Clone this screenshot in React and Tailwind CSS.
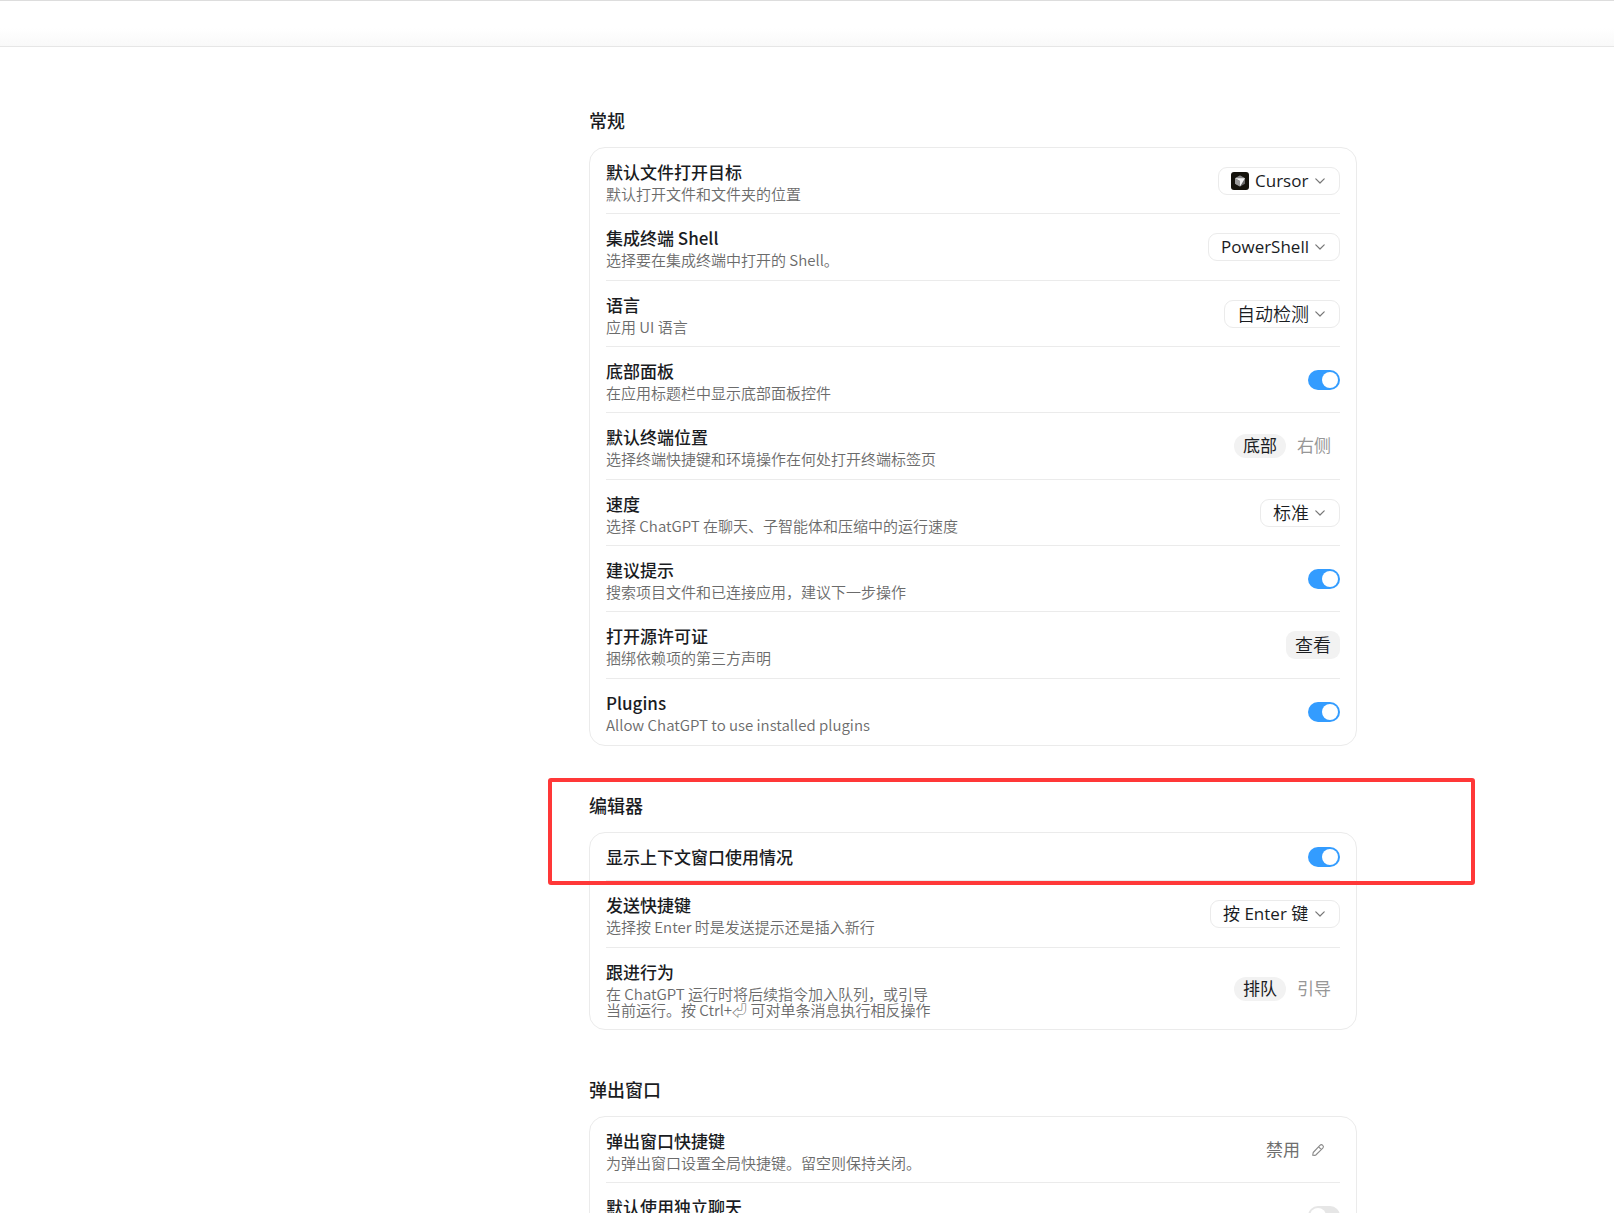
import React, { useState } from "react";

const fontStack = "font-['Open_Sans','Noto_Sans_CJK_SC',sans-serif]";

function ChevronIcon() {
  return (
    <svg
      className="pointer-events-none ml-[6px] h-[10px] w-[10px] shrink-0 text-[#777777]"
      viewBox="0 0 10 10"
      fill="none"
      stroke="currentColor"
      strokeWidth="1.2"
      strokeLinecap="round"
      strokeLinejoin="round"
      aria-hidden="true"
    >
      <path d="M0.8 2.8 5 7l4.2-4.2" />
    </svg>
  );
}

function CursorLogo() {
  return (
    <svg className="mr-[6px] h-[18px] w-[18px] shrink-0" viewBox="0 0 18 18" aria-hidden="true">
      <rect width="18" height="18" rx="3" fill="#14120b" />
      <path d="M9 3.4 4 6.2v5.6l5 2.8 5-2.8V6.2z" fill="#6a6a6a" />
      <path d="M9 3.4 4 6.2 9 9l5-2.8z" fill="#858585" />
      <path d="M4 6.2h10l-5 8.4V9z" fill="#f1f1f1" />
      <path d="M4 6.2 9 9v5.6l-5-2.8z" fill="#9a9a9a" />
    </svg>
  );
}

function PencilIcon() {
  return (
    <svg
      className="h-[14px] w-[14px] text-[#8a8a8a]"
      viewBox="0 0 14 14"
      fill="none"
      stroke="currentColor"
      strokeWidth="1.1"
      strokeLinejoin="round"
      aria-hidden="true"
    >
      <path d="M1.7 12.3 2.2 9.5 8.9 2.4a2 2 0 0 1 2.9 2.8L4.8 12a2 2 0 0 1-.9.4zM7.6 3.8l2.8 2.8" />
    </svg>
  );
}

function Select({ id, value, icon }) {
  // 含拉丁字母的选项字号略小
  const hasLatin = /[A-Za-z]/.test(value);
  return (
    <div className="flex h-7 items-center rounded-[9px] border border-[#ebebeb] bg-white pr-[14px] pl-3">
      {icon}
      <select
        id={id}
        className={`h-[26px] appearance-none bg-transparent leading-[26px] outline-none ${
          hasLatin ? "text-[17px]" : "text-lg font-[350]"
        }`}
      >
        <option>{value}</option>
      </select>
      <ChevronIcon />
    </div>
  );
}

function Toggle({ id, defaultOn }) {
  const [on, setOn] = useState(defaultOn);
  return (
    <input
      id={id}
      type="checkbox"
      role="switch"
      checked={on}
      onChange={() => setOn(!on)}
      className="h-5 w-8 cursor-pointer appearance-none rounded-full bg-[#e6e6e6] p-[2px] before:block before:h-4 before:w-4 before:rounded-full before:bg-white checked:bg-[#339cff] checked:pl-[14px]"
    />
  );
}

function Segmented({ id, options }) {
  const [active, setActive] = useState(options[0]);
  return (
    <div role="group" aria-labelledby={`${id}-label`} className="flex gap-[2px]">
      {options.map((option) => (
        <button
          key={option}
          type="button"
          aria-pressed={active === option}
          onClick={() => setActive(option)}
          className={`h-6 rounded-full px-[9px] text-[17px] leading-6 ${
            active === option ? "bg-[#f2f2f2] text-[#1a1c1f]" : "text-[#979797]"
          }`}
        >
          {option}
        </button>
      ))}
    </div>
  );
}

function Control({ row }) {
  switch (row.type) {
    case "select":
      return <Select id={row.id} value={row.value} icon={row.icon} />;
    case "toggle":
      return <Toggle id={row.id} defaultOn={row.on} />;
    case "segmented":
      return <Segmented id={row.id} options={row.options} />;
    case "shortcut":
      return (
        <div className="flex items-center gap-[11px] pr-[15px] text-[17px] text-[#6f6f6f]">
          <span>{row.value}</span>
          <button id={row.id} type="button" aria-labelledby={`${row.id}-label`}>
            <PencilIcon />
          </button>
        </div>
      );
    default:
      return (
        <button
          id={row.id}
          type="button"
          className="h-7 rounded-[9px] bg-[#f2f2f2] px-[9px] text-lg leading-7 font-[350]"
        >
          {row.value}
        </button>
      );
  }
}

function Row({ row }) {
  return (
    <div className="flex items-center justify-between border-b border-[#ebebeb] pt-3 pb-[11px] last:border-b-0">
      <div className="flex flex-col gap-[2px] font-['Noto_Sans_CJK_SC',sans-serif]">
        <label
          id={`${row.id}-label`}
          htmlFor={row.type === "segmented" ? undefined : row.id}
          className="text-[17px] leading-6 font-medium"
        >
          {row.title}
        </label>
        {row.desc !== undefined && (
          <p className="min-h-4 text-[15px] leading-4 font-[350] whitespace-pre-line text-[#6b6b6b]">{row.desc}</p>
        )}
      </div>
      <Control row={row} />
    </div>
  );
}

function Section({ title, rows, className = "", cardClassName = "", children }) {
  return (
    <section className={`relative ${className}`}>
      <h2 className="mb-3 text-lg leading-7 font-medium">{title}</h2>
      <div className={`grid rounded-2xl border border-[#ebebeb] px-4 ${cardClassName}`}>
        {rows.map((row) => (
          <Row key={row.id} row={row} />
        ))}
      </div>
      {children}
    </section>
  );
}

const generalRows = [
  { id: "open-target", type: "select", title: "默认文件打开目标", desc: "默认打开文件和文件夹的位置", value: "Cursor", icon: <CursorLogo /> },
  { id: "shell", type: "select", title: "集成终端 Shell", desc: "选择要在集成终端中打开的 Shell。", value: "PowerShell" },
  { id: "language", type: "select", title: "语言", desc: "应用 UI 语言", value: "自动检测" },
  { id: "bottom-panel", type: "toggle", title: "底部面板", desc: "在应用标题栏中显示底部面板控件", on: true },
  { id: "terminal-position", type: "segmented", title: "默认终端位置", desc: "选择终端快捷键和环境操作在何处打开终端标签页", options: ["底部", "右侧"] },
  { id: "speed", type: "select", title: "速度", desc: "选择 ChatGPT 在聊天、子智能体和压缩中的运行速度", value: "标准" },
  { id: "suggestions", type: "toggle", title: "建议提示", desc: "搜索项目文件和已连接应用，建议下一步操作", on: true },
  { id: "licenses", type: "button", title: "打开源许可证", desc: "捆绑依赖项的第三方声明", value: "查看" },
  { id: "plugins", type: "toggle", title: "Plugins", desc: "Allow ChatGPT to use installed plugins", on: true },
];

const editorRows = [
  { id: "context-usage", type: "toggle", title: "显示上下文窗口使用情况", on: true },
  { id: "send-key", type: "select", title: "发送快捷键", desc: "选择按 Enter 时是发送提示还是插入新行", value: "按 Enter 键" },
  {
    id: "follow-up",
    type: "segmented",
    title: "跟进行为",
    desc: "在 ChatGPT 运行时将后续指令加入队列，或引导\n当前运行。按 Ctrl+⏎ 可对单条消息执行相反操作",
    options: ["排队", "引导"],
  },
];

const popupRows = [
  { id: "popup-key", type: "shortcut", title: "弹出窗口快捷键", desc: "为弹出窗口设置全局快捷键。留空则保持关闭。", value: "禁用" },
  { id: "popup-chat", type: "toggle", title: "默认使用独立聊天", desc: "", on: false },
];

export default function App() {
  return (
    <div className={`h-screen overflow-hidden bg-white text-[#1a1c1f] ${fontStack}`}>
      <header className="h-[47px] border-t border-b border-t-[#dddddd] border-b-[#e6e6e6] bg-linear-to-b from-white from-60% to-[#f9f9f9]" />
      <main className="pl-[332px]">
        <div className="mx-auto max-w-3xl pt-[60px]">
          <Section title="常规" rows={generalRows} cardClassName="min-h-[599px] auto-rows-fr" />
          {/* 红框标注编辑器的第一项 */}
          <Section title="编辑器" rows={editorRows} className="mt-[46px]" cardClassName="min-h-[198px]">
            <div className="pointer-events-none absolute -top-[14px] -right-[118px] -left-[41px] h-[107px] rounded-[3px] border-4 border-[#ff3838]" />
          </Section>
          <Section title="弹出窗口" rows={popupRows} className="mt-[46px]" />
        </div>
      </main>
    </div>
  );
}
